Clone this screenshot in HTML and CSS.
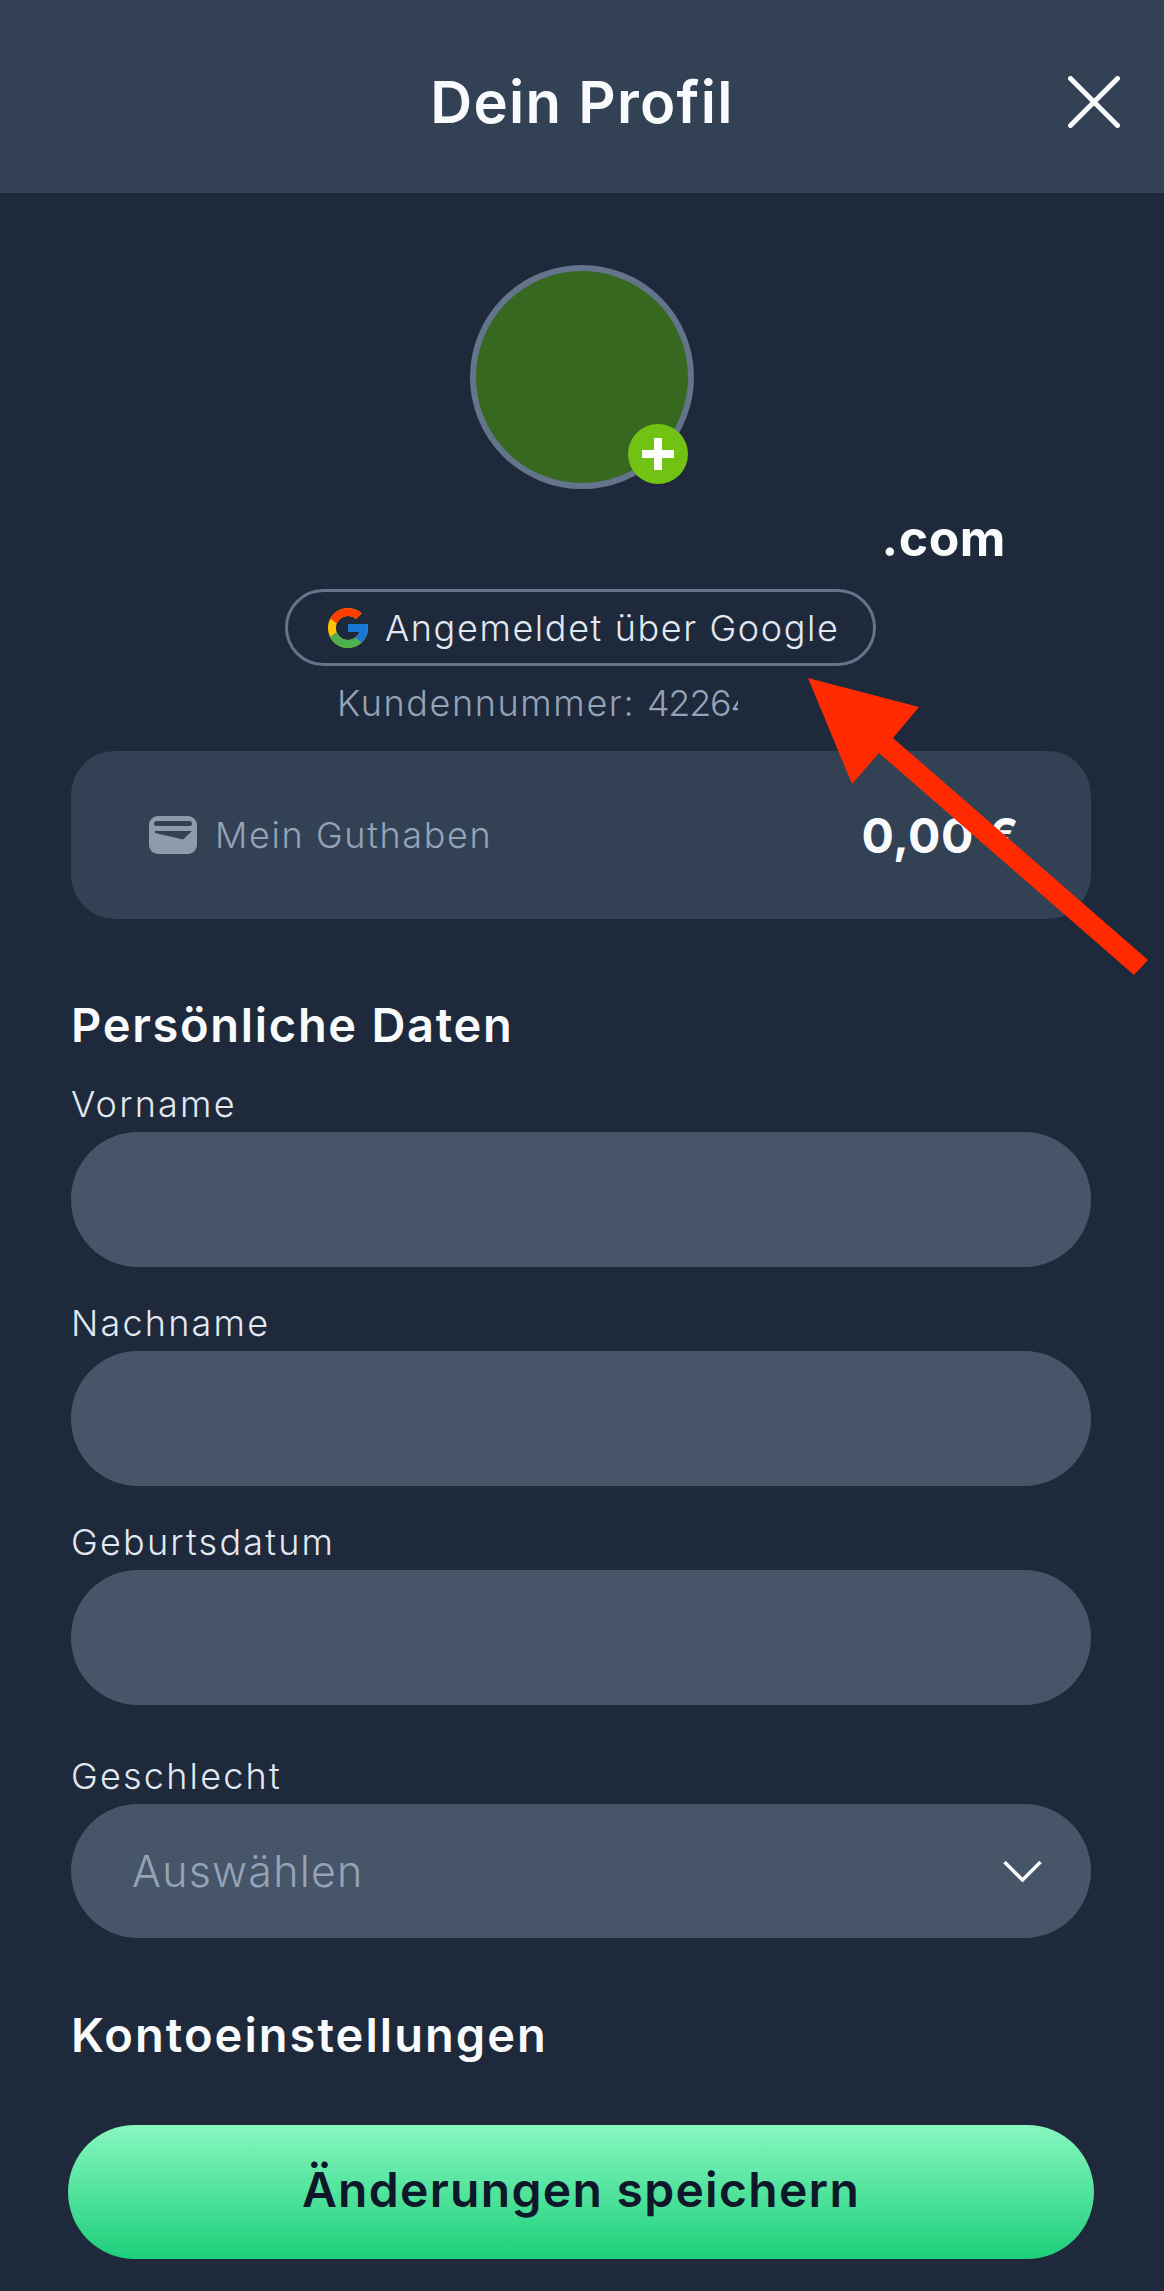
FILE: index.html
```html
<!DOCTYPE html>
<html lang="de">
<head>
<meta charset="utf-8">
<title>Dein Profil</title>
<link rel="stylesheet" href="styles.css">
</head>
<body>
<div class="page">
  <header class="topbar">
    <h1 class="topbar-title">Dein Profil</h1>
    <button class="close" type="button" aria-label="Schließen">
      <svg width="52" height="52" viewBox="0 0 52 52"><path d="M2.5 2.5l47 47M49.5 2.5l-47 47" fill="none" stroke="#f8fafc" stroke-width="5" stroke-linecap="round"/></svg>
    </button>
  </header>

  <main class="content">
    <div class="avatar">
      <span class="avatar-add">
        <svg width="34" height="34" viewBox="0 0 34 34"><path d="M13 1h8v12h12v8H21v12h-8V21H1v-8h12z" fill="#fff"/></svg>
      </span>
    </div>
    <div class="email">.com</div>
    <div class="provider-row">
      <div class="provider">
        <svg class="google" width="48" height="48" viewBox="0 0 48 48">
          <path fill="#FFC107" d="M43.6 20.1H42V20H24v8h11.3C33.7 32.7 29.2 36 24 36c-6.6 0-12-5.4-12-12s5.4-12 12-12c3.1 0 5.8 1.2 8 3l5.700-5.700C34 6.100 29.300 4 24 4 13 4 4 13 4 24s9 20 20 20 20-9 20-20c0-1.300-.1-2.700-.4-3.900z"/>
          <path fill="#FF3D00" d="M6.300 14.700l6.600 4.800C14.700 15.100 19 12 24 12c3.100 0 5.800 1.200 8 3l5.700-5.700C34 6.100 29.300 4 24 4 16.300 4 9.700 8.300 6.300 14.700z"/>
          <path fill="#4CAF50" d="M24 44c5.200 0 9.900-2 13.400-5.200l-6.200-5.200C29.200 35.100 26.700 36 24 36c-5.200 0-9.600-3.300-11.300-8l-6.500 5C9.500 39.600 16.200 44 24 44z"/>
          <path fill="#1976D2" d="M43.600 20.100H42V20H24v8h11.300c-.8 2.200-2.200 4.200-4.100 5.600l6.200 5.200C37 39.200 44 34 44 24c0-1.300-.1-2.700-.4-3.900z"/>
        </svg>
        <span>Angemeldet über Google</span>
      </div>
    </div>
    <div class="customer-row"><span class="customer">Kundennummer: <span class="customer-id">42264</span></span></div>

    <section class="balance">
      <div class="balance-label">
        <svg width="48" height="38" viewBox="0 0 48 38">
          <rect width="48" height="38" rx="9" fill="#8f9bab"/>
          <rect x="5" y="5" width="38" height="5" rx="2.500" fill="#334155"/>
          <path d="M6 15h37l-9 8.500L6 17z" fill="#334155"/>
        </svg>
        <span>Mein Guthaben</span>
      </div>
      <strong class="balance-value">0,00 €</strong>
    </section>

    <h2 class="section-title section-personal">Persönliche Daten</h2>
    <label class="field-label" for="vorname">Vorname</label>
    <input class="field" id="vorname" type="text">
    <label class="field-label spaced" for="nachname">Nachname</label>
    <input class="field" id="nachname" type="text">
    <label class="field-label spaced" for="geburtsdatum">Geburtsdatum</label>
    <input class="field" id="geburtsdatum" type="text">
    <div class="field-label spaced-wide">Geschlecht</div>
    <div class="field select">
      <span>Auswählen</span>
      <svg width="39" height="22" viewBox="0 0 39 22"><path d="M1.500 2l18 18 18-18" fill="none" stroke="#f8fafc" stroke-width="3.500"/></svg>
    </div>

    <h2 class="section-title section-account">Kontoeinstellungen</h2>
    <button class="save" type="button">Änderungen speichern</button>
  </main>

  <svg class="callout" width="1164" height="2291" viewBox="0 0 1164 2291">
    <path d="M808 678L919 707 893 738 1148 960 1134 975 879 753 852 784z" fill="#ff2a00"/>
  </svg>
</div>
</body>
</html>
```
FILE: styles.css
```css
* { box-sizing: border-box; }

html, body { margin: 0; padding: 0; }

body {
  background: #1e293b;
  color: #f8fafc;
  font-family: Inter, "Noto Sans", sans-serif;
}

.page {
  position: relative;
  width: 1164px;
  height: 2291px;
  overflow: hidden;
}

.topbar {
  position: relative;
  height: 193px;
  background: #334155;
  display: flex;
  align-items: center;
  justify-content: center;
}

.topbar-title {
  margin: 11px 0 0;
  font-size: 58px;
  font-weight: 600;
  letter-spacing: 1.300px;
}

.close {
  position: absolute;
  left: 1068px;
  top: 76px;
  width: 52px;
  height: 52px;
  padding: 0;
  border: 0;
  background: none;
  display: block;
}

.close svg { display: block; }

.content {
  padding: 0 73px 0 71px;
}

.avatar {
  position: relative;
  width: 224px;
  height: 224px;
  margin: 72px 0 0 399px;
  border: 6px solid #64748b;
  border-radius: 50%;
  background: #36691f;
}

.avatar-add {
  position: absolute;
  left: 152px;
  top: 153px;
  width: 60px;
  height: 60px;
  border-radius: 50%;
  background: #72c214;
  display: flex;
  align-items: center;
  justify-content: center;
}

.email {
  margin-top: 19px;
  padding-right: 85px;
  font-size: 50px;
  line-height: 60px;
  font-weight: 700;
  letter-spacing: 0.500px;
  text-align: right;
}

.provider-row {
  margin-top: 21px;
  padding-left: 214px;
}

.provider {
  display: flex;
  align-items: center;
  gap: 13px;
  width: 591px;
  height: 77px;
  padding-left: 36px;
  border: 3px solid #64748b;
  border-radius: 39px;
  font-size: 36px;
  font-weight: 300;
  letter-spacing: 1.600px;
  color: #e2e8f0;
}

.customer-row {
  margin-top: 17px;
  padding-left: 266px;
}

.customer {
  display: block;
  width: 401px;
  overflow: hidden;
  white-space: nowrap;
  font-size: 36px;
  line-height: 40px;
  font-weight: 300;
  letter-spacing: 1.600px;
  color: #94a3b8;
}

.customer-id { letter-spacing: -1.200px; }

.balance {
  margin-top: 28px;
  height: 168px;
  padding: 0 72px 0 78px;
  background: #334155;
  border-radius: 44px;
  display: flex;
  align-items: center;
  justify-content: space-between;
}

.balance-label {
  display: flex;
  align-items: center;
  gap: 18px;
  font-size: 36px;
  font-weight: 300;
  letter-spacing: 1.600px;
  color: #94a3b8;
}

.balance-label svg { display: block; }

.balance-value {
  font-size: 48px;
  font-weight: 700;
  letter-spacing: 0.500px;
}

.section-title {
  margin: 0;
  font-size: 47px;
  line-height: 60px;
  font-weight: 600;
  letter-spacing: 1.700px;
}

.section-personal { margin-top: 76px; margin-bottom: 28px; }
.section-account { margin-top: 67px; margin-bottom: 60px; letter-spacing: 2.050px; }

.field-label {
  display: block;
  height: 44px;
  margin-bottom: 5px;
  font-size: 36px;
  line-height: 42px;
  font-weight: 300;
  letter-spacing: 2.200px;
  color: #e2e8f0;
}

.spaced { margin-top: 35px; }
.spaced-wide { margin-top: 50px; }

.field {
  display: block;
  width: 100%;
  height: 135px;
  border: 0;
  border-radius: 67px;
  background: #475569;
}

.select {
  display: flex;
  align-items: center;
  justify-content: space-between;
  height: 134px;
  padding: 0 49px 0 61px;
  font-size: 43px;
  font-weight: 300;
  letter-spacing: 1.200px;
  color: #94a3b8;
}

.save {
  display: block;
  width: 1026px;
  height: 134px;
  margin: 0 -3px;
  padding: 0 0 5px;
  border: 0;
  border-radius: 67px;
  background: linear-gradient(180deg, #88f7c0 0%, #1dcf7a 100%);
  color: #0f172a;
  font-family: inherit;
  font-size: 48px;
  font-weight: 600;
  letter-spacing: 1.300px;
}

.callout {
  position: absolute;
  left: 0;
  top: 0;
  pointer-events: none;
}
```
